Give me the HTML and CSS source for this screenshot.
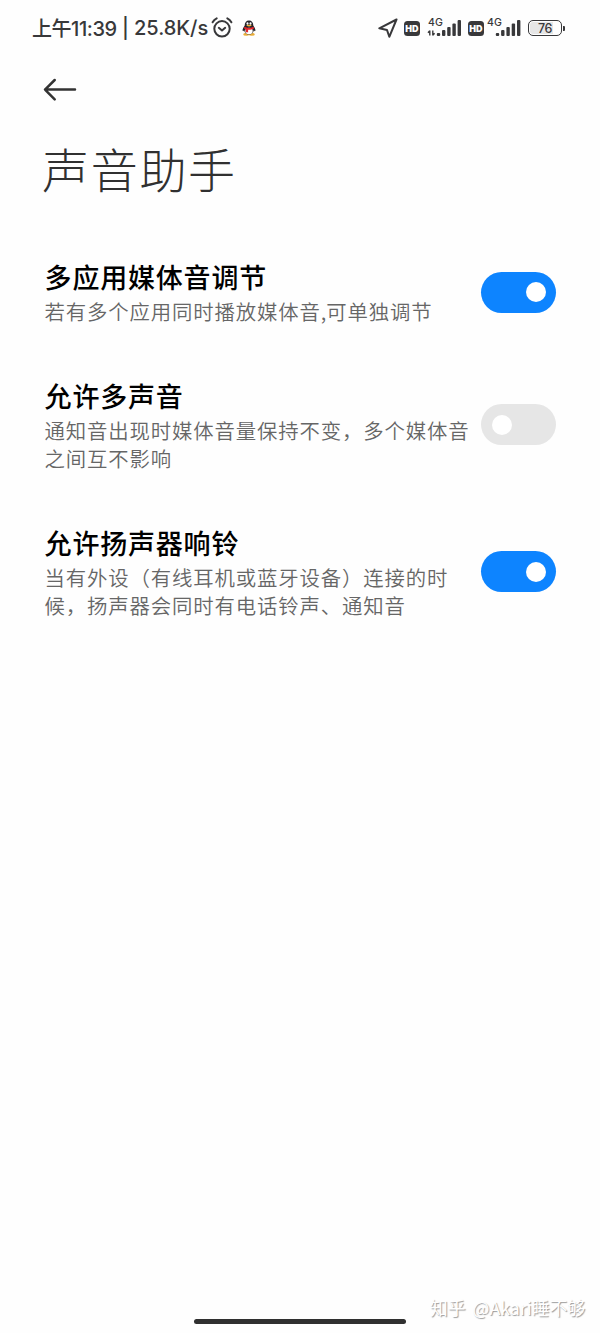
FILE: index.html
```html
<!DOCTYPE html>
<html lang="zh-CN">
<head>
<meta charset="utf-8">
<title>声音助手</title>
<link rel="stylesheet" href="styles.css">
</head>
<body>
<div class="screen">
  <header class="status">
    <div class="status-left">
      <span class="clock"><span class="clock-cjk">上午</span>11:39</span><span class="divider">|</span><span class="speed">25.8K/s</span>
      <svg class="alarm" width="22" height="22" viewBox="0 0 22 22" fill="none" stroke="#38383a" stroke-width="2" stroke-linecap="round" stroke-linejoin="round"><circle cx="11" cy="11.8" r="7.7"/><path d="M1.6 5.3C2.6 3.5 4 2.2 5.7 1.4M20.4 5.3C19.4 3.5 18 2.2 16.3 1.4M7.8 10.8l3.2 2.7 3.2-2.7"/></svg>
      <svg class="qq" width="14" height="16" viewBox="0 0 14 16"><ellipse cx="4.2" cy="14.4" rx="3" ry="1.3" fill="#e9ad38"/><ellipse cx="9.8" cy="14.4" rx="3" ry="1.3" fill="#e9ad38"/><path d="M7 .5c2.8 0 4.3 2 4.3 5.1 1 1.5 2.3 3.3 2.1 5-.3 1-1.1.4-1.6-.3-.3 2.7-2.2 4.2-4.8 4.2s-4.5-1.5-4.8-4.2c-.5.7-1.3 1.3-1.6.3-.2-1.700 1.100-3.500 2.100-5C2.700 2.500 4.200.5 7 .5z" fill="#252329"/><ellipse cx="7" cy="11" rx="3.700" ry="3.200" fill="#fff"/><ellipse cx="5.500" cy="3.500" rx="1" ry="1.300" fill="#fff"/><ellipse cx="8.500" cy="3.500" rx="1" ry="1.300" fill="#fff"/><ellipse cx="7" cy="5.600" rx="2.700" ry=".8" fill="#f2b43a"/><path d="M2.400 6.800c2.700 1.500 6.500 1.500 9.200 0l.4 1.700c-2 1.100-4 1.300-5.900 1.200v2.500H3.900V9.200L2 8.400z" fill="#e5242d"/></svg>
    </div>
    <div class="status-right">
      <svg class="locate" width="20" height="20" viewBox="0 0 20 20" fill="none" stroke="#38383a" stroke-width="2" stroke-linejoin="round"><path d="M18.500 1.500 1.300 10.300 9 12 11.300 18.800z"/></svg>
      <span class="hd">HD</span>
      <span class="network network-data">
        <span class="gen">4G</span>
        <svg width="35" height="18" viewBox="0 0 35 18" fill="#38383a"><path d="M2.800 11.500v5M1 13.700l1.800-2M5.800 11.500v5M5.800 16.300l1.800-2" fill="none" stroke="#38383a" stroke-width="1.400"/><rect x="9.800" y="14" width="3.400" height="3" rx="1"/><rect x="15" y="11" width="3.400" height="6" rx="1"/><rect x="20.200" y="8" width="3.400" height="9" rx="1"/><rect x="25.400" y="4.500" width="3.400" height="12.500" rx="1"/><rect x="30.600" y="1" width="3.400" height="16" rx="1"/></svg>
      </span>
      <span class="hd">HD</span>
      <span class="network">
        <span class="gen">4G</span>
        <svg width="26" height="18" viewBox="0 0 26 18" fill="#38383a"><rect x=".8" y="14" width="3.400" height="3" rx="1"/><rect x="6.100" y="11" width="3.400" height="6" rx="1"/><rect x="11.400" y="8" width="3.400" height="9" rx="1"/><rect x="16.700" y="4.500" width="3.400" height="12.500" rx="1"/><rect x="22" y="1" width="3.400" height="16" rx="1"/></svg>
      </span>
      <span class="battery"><span class="battery-case">76</span><span class="battery-tip"></span></span>
    </div>
  </header>

  <nav class="nav">
    <svg width="34" height="24" viewBox="0 0 34 24" fill="none" stroke="#333" stroke-width="2.500" stroke-linecap="round" stroke-linejoin="round"><path d="M32 11.600H2M11.700 2 2 11.600l9.700 9.700"/></svg>
  </nav>

  <h1 class="title">声音助手</h1>

  <main class="settings">
    <section class="item">
      <div class="text">
        <h2 class="name">多应用媒体音调节</h2>
        <p class="desc">若有多个应用同时播放媒体音<span class="comma">,</span>可单独调节</p>
      </div>
      <span class="toggle toggle-on"><span class="knob"></span></span>
    </section>
    <section class="item">
      <div class="text">
        <h2 class="name">允许多声音</h2>
        <p class="desc">通知音出现时媒体音量保持不变，多个媒体音<br>之间互不影响</p>
      </div>
      <span class="toggle"><span class="knob"></span></span>
    </section>
    <section class="item">
      <div class="text">
        <h2 class="name">允许扬声器响铃</h2>
        <p class="desc">当有外设（有线耳机或蓝牙设备）连接的时<br>候，扬声器会同时有电话铃声、通知音</p>
      </div>
      <span class="toggle toggle-on"><span class="knob"></span></span>
    </section>
  </main>

  <footer class="bottom">
    <div class="home-bar"></div>
    <div class="watermark"><span>知乎</span><span>@Akari睡不够</span></div>
  </footer>
</div>
</body>
</html>
```
FILE: styles.css
```css
* { box-sizing: border-box; }

body {
  margin: 0;
  background: #fefefe;
  font-family: "Noto Sans CJK SC", sans-serif;
}

.screen {
  display: flex;
  flex-direction: column;
  width: 600px;
  height: 1333px;
  overflow: hidden;
}

.status {
  display: flex;
  justify-content: space-between;
  height: 56px;
  padding: 0 35px 0 32px;
  color: #38383a;
}

.status-left,
.status-right {
  display: flex;
  align-items: center;
  white-space: nowrap;
}

.clock,
.speed,
.divider {
  font-family: Inter, "Noto Sans CJK SC", sans-serif;
  font-size: 20px;
  font-weight: 450;
  line-height: 30px;
}

.clock-cjk { font-family: "Noto Sans CJK SC", sans-serif; letter-spacing: -0.5px; }
.clock { width: 85px; letter-spacing: -0.4px; }
.divider { width: 17px; text-align: center; }
.speed { width: 76px; }
.alarm { margin-left: 1px; }
.qq { margin-left: 9px; }

.locate { margin-right: 6px; }

.hd {
  width: 16px;
  height: 15px;
  border-radius: 3.5px;
  background: #38383a;
  color: #fff;
  font: 900 9px/15px Inter, sans-serif;
  text-align: center;
}

.network {
  position: relative;
  height: 18px;
  margin: 0 7px 0 11px;
}

.network svg { display: block; }
.network-data { margin: 0 6px 0 7px; }

.gen {
  position: absolute;
  top: -2px;
  left: 1px;
  font: 450 10.5px/12px Inter, sans-serif;
}

.network:not(.network-data) .gen { left: -8px; }

.battery { display: flex; align-items: center; gap: 1px; }

.battery-case {
  width: 34px;
  height: 16px;
  border: 1.5px solid #38383a;
  border-radius: 5px;
  background: linear-gradient(90deg, #e6e6e6 76%, #fefefe 76%);
  box-shadow: inset 0 0 0 1px #fefefe;
  font: 500 12.5px/15px Inter, sans-serif;
  letter-spacing: -0.5px;
  text-align: center;
}

.battery-tip {
  width: 2px;
  height: 5px;
  border-radius: 0 1px 1px 0;
  background: #38383a;
}

.nav {
  height: 68px;
  padding: 22px 0 0 43px;
}

.title {
  height: 92px;
  margin: 0;
  padding: 9px 0 0 42px;
  color: #303030;
  font-size: 47px;
  font-weight: 300;
  line-height: 70px;
  letter-spacing: 1.7px;
}

.settings {
  display: flex;
  flex-direction: column;
  gap: 52.8px;
  padding: 43px 44px 0 44.6px;
}

.item {
  display: flex;
  align-items: center;
  justify-content: space-between;
}

.name {
  margin: 0 0 3px;
  color: #000;
  font-size: 27px;
  font-weight: 500;
  line-height: 35px;
  letter-spacing: 0.8px;
}

.desc {
  margin: 0;
  color: #666;
  font-size: 20.4px;
  font-weight: 350;
  line-height: 28px;
  letter-spacing: 0.85px;
  white-space: nowrap;
}

.comma { letter-spacing: 0; }

.toggle {
  display: flex;
  flex: none;
  align-items: center;
  width: 75px;
  height: 41px;
  padding: 0 10.5px;
  border-radius: 21px;
  background: #e6e6e6;
}

.toggle-on {
  justify-content: flex-end;
  background: #0d84ff;
}

.knob {
  width: 20px;
  height: 20px;
  border-radius: 50%;
  background: #fff;
}

.bottom {
  display: flex;
  height: 40px;
  margin-top: auto;
  padding-left: 194px;
}

.home-bar {
  width: 212px;
  height: 5px;
  margin-top: 26px;
  border-radius: 3px;
  background: #303030;
}

.watermark {
  display: flex;
  gap: 7px;
  margin: -1px 0 0 24px;
  color: #fff;
  font-size: 17.8px;
  line-height: 30px;
  white-space: nowrap;
  text-shadow: 1px 1px 1px #999;
}
```
